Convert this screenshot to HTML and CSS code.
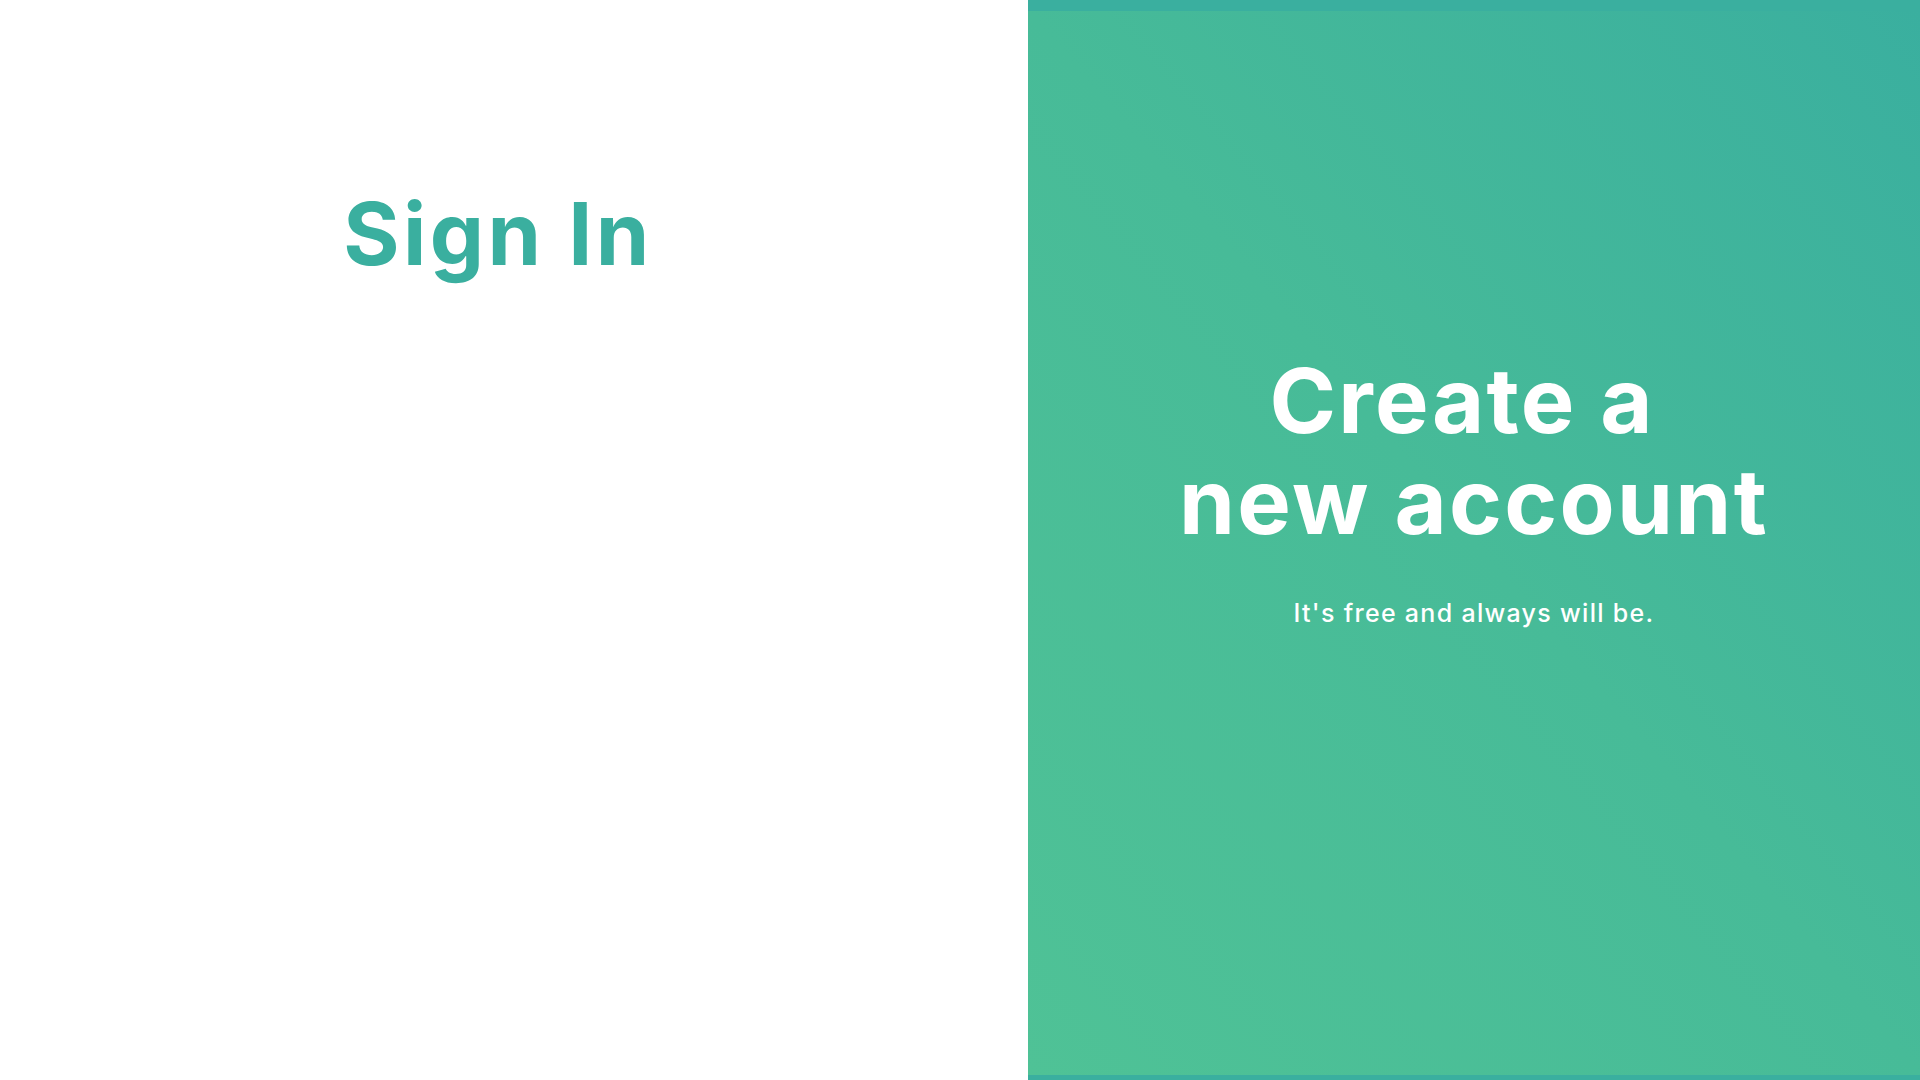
FILE: index.html
```html
<!DOCTYPE html>
<html lang="en">
<head>
<meta charset="utf-8">
<title>Sign In</title>
<link rel="stylesheet" href="styles.css">
</head>
<body>
<div class="page">
  <section class="signin">
    <h1 class="signin-title">Sign In</h1>
  </section>
  <section class="signup">
    <div class="signup-inner">
      <h2 class="signup-title">Create a&nbsp;<br>new account</h2>
      <p class="signup-sub">It's free and always will be.</p>
    </div>
  </section>
</div>
</body>
</html>
```

FILE: styles.css
```css
html, body {
  margin: 0;
  padding: 0;
  height: 100%;
}
body {
  font-family: "Inter", "Liberation Sans", sans-serif;
  overflow: hidden;
}
.page {
  display: flex;
  width: 1920px;
  height: 1080px;
}
.signin {
  width: 1028px;
  background: #ffffff;
  display: flex;
  flex-direction: column;
  align-items: center;
  padding-right: 32px;
  box-sizing: border-box;
}
.signin-title {
  margin: 191px 0 0 0;
  font-size: 86px;
  line-height: 1;
  font-weight: 700;
  letter-spacing: 3.4px;
  color: #3aaf9f;
}
.signup {
  flex: 1;
  border-top: 11px solid #3aaf9f;
  border-bottom: 5px solid #3aaf9f;
  background: linear-gradient(to top right, #4fc296 0%, #47bb98 50%, #3aaf9f 100%);
  display: flex;
  flex-direction: column;
  align-items: center;
  color: #ffffff;
}
.signup-inner {
  display: flex;
  flex-direction: column;
  align-items: center;
  margin-top: 339px;
}
.signup-title {
  margin: 0;
  font-size: 90px;
  line-height: 101px;
  font-weight: 700;
  letter-spacing: 2.3px;
  text-align: center;
}
.signup-sub {
  margin: 46px 0 0 0;
  font-size: 25px;
  font-weight: 500;
  letter-spacing: 1.3px;
}
```
